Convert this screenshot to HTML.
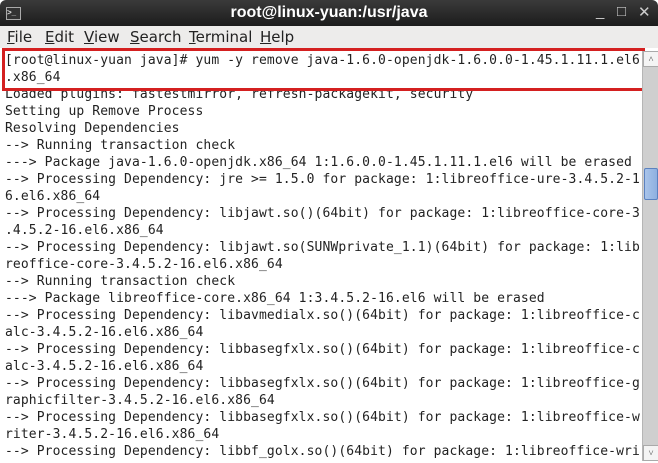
<!DOCTYPE html>
<html><head><meta charset="utf-8"><style>
html,body{margin:0;padding:0;width:658px;height:463px;overflow:hidden;background:#fff}
.title{position:absolute;left:0;top:0;width:658px;height:26px;background:linear-gradient(#3a3a3a,#1c1c1c);border-radius:6px 6px 0 0;color:#fff;font:bold 16px "Liberation Sans","DejaVu Sans",sans-serif}
.title .t{position:absolute;left:0;right:0;top:4px;text-align:center}
.title .ic{position:absolute;left:6px;top:7px;width:13px;height:11px;border:1px solid #aaa;background:#333;font-size:8px;color:#ddd;line-height:10px}
.title .b{position:absolute;top:3px;color:#ccc;font-size:15px;font-weight:normal}
.menu{position:absolute;left:0;top:26px;width:658px;height:22px;background:#edeceb;font:15px "DejaVu Sans",sans-serif;color:#222}
.menu span{position:absolute;top:2px}
.term{position:absolute;left:5px;top:52px;font:13px/17px "DejaVu Sans Mono","Liberation Mono",monospace;letter-spacing:0.11px;color:#222;white-space:pre}
.box{position:absolute;left:2px;top:48px;width:637px;height:37px;border:3px solid #d42020}
.sb{position:absolute;left:642px;top:51px;width:15px;height:410px;background:#cfcfcf;border-left:1px solid #b5b5b5}
.arr{position:absolute;left:0;width:14px;height:14px;background:#f4f4f4;border:1px solid #aaa;font-size:9px;text-align:center;line-height:14px;color:#333}
.thumb{position:absolute;left:1px;top:117px;width:12px;height:30px;background:linear-gradient(90deg,#a9c4ea,#8eb0e0);border:1px solid #5b82c0;border-radius:2px}
</style></head><body>
<div class="title"><div class="ic">&gt;_</div><div class="t">root@linux-yuan:/usr/java</div><span class="b" style="left:596px">_</span><span class="b" style="left:617px">□</span><span class="b" style="left:638px">✕</span></div>
<div class="menu"><span style="left:7px"><u>F</u>ile</span><span style="left:45px"><u>E</u>dit</span><span style="left:84px"><u>V</u>iew</span><span style="left:130px"><u>S</u>earch</span><span style="left:189px"><u>T</u>erminal</span><span style="left:260px"><u>H</u>elp</span></div>
<div class="term">[root@linux-yuan java]# yum -y remove java-1.6.0-openjdk-1.6.0.0-1.45.1.11.1.el6
.x86_64
Loaded plugins: fastestmirror, refresh-packagekit, security
Setting up Remove Process
Resolving Dependencies
--> Running transaction check
---> Package java-1.6.0-openjdk.x86_64 1:1.6.0.0-1.45.1.11.1.el6 will be erased
--> Processing Dependency: jre >= 1.5.0 for package: 1:libreoffice-ure-3.4.5.2-1
6.el6.x86_64
--> Processing Dependency: libjawt.so()(64bit) for package: 1:libreoffice-core-3
.4.5.2-16.el6.x86_64
--> Processing Dependency: libjawt.so(SUNWprivate_1.1)(64bit) for package: 1:lib
reoffice-core-3.4.5.2-16.el6.x86_64
--> Running transaction check
---> Package libreoffice-core.x86_64 1:3.4.5.2-16.el6 will be erased
--> Processing Dependency: libavmedialx.so()(64bit) for package: 1:libreoffice-c
alc-3.4.5.2-16.el6.x86_64
--> Processing Dependency: libbasegfxlx.so()(64bit) for package: 1:libreoffice-c
alc-3.4.5.2-16.el6.x86_64
--> Processing Dependency: libbasegfxlx.so()(64bit) for package: 1:libreoffice-g
raphicfilter-3.4.5.2-16.el6.x86_64
--> Processing Dependency: libbasegfxlx.so()(64bit) for package: 1:libreoffice-w
riter-3.4.5.2-16.el6.x86_64
--> Processing Dependency: libbf_golx.so()(64bit) for package: 1:libreoffice-wri</div>
<div class="box"></div>
<div class="sb"><div class="arr" style="top:0">˄</div><div class="thumb"></div><div class="arr" style="top:394px">˅</div></div>
</body></html>
